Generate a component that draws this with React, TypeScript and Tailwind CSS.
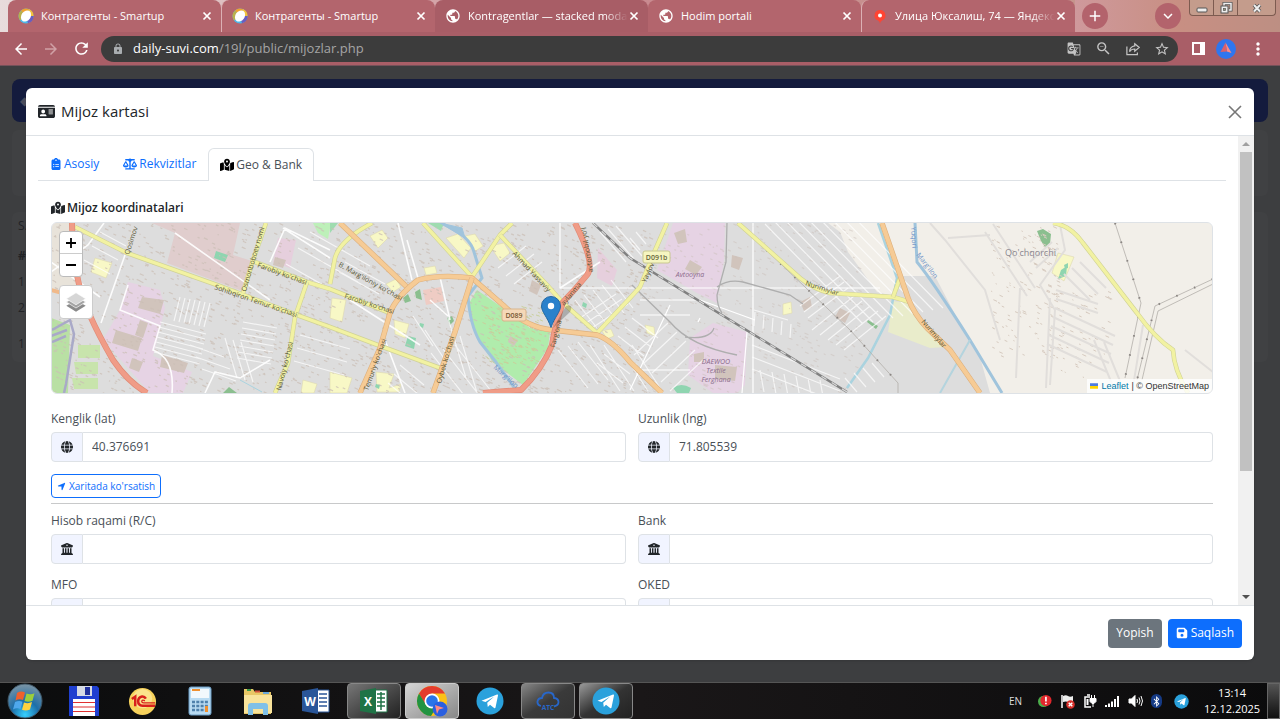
import React from "react";
import {
  FaIdCard,
  FaClipboardList,
  FaScaleBalanced,
  FaMapLocationDot,
  FaGlobe,
  FaBuildingColumns,
  FaLocationArrow,
  FaFloppyDisk,
  FaBluetoothB,
} from "react-icons/fa6";
import {
  MdArrowBack,
  MdArrowForward,
  MdRefresh,
  MdLock,
  MdGTranslate,
  MdZoomOut,
  MdStarBorder,
  MdPublic,
  MdMoreVert,
  MdAdd,
  MdExpandMore,
} from "react-icons/md";

/* ---------- Browser chrome ---------- */

function SmartupIcon() {
  return (
    <svg viewBox="0 0 16 16" className="size-4">
      <circle cx="8" cy="8" r="7.500" fill="#4fb8e8" />
      <path d="M8 8L2 12.500A7.500 7.500 0 0 1 3 2.400z" fill="#b9b04c" />
      <path d="M8 8L3 2.400A7.500 7.500 0 0 1 11 1.100z" fill="#f0a22e" />
      <path d="M8 8L11 1.100A7.500 7.500 0 0 1 15.500 8z" fill="#f3c13a" />
      <path d="M8 8H15.500A7.500 7.500 0 0 1 10 15.200z" fill="#6a5cc0" />
      <ellipse cx="8" cy="8" rx="4.600" ry="6" fill="#fff" transform="rotate(35 8 8)" />
    </svg>
  );
}

function YandexPin() {
  return (
    <svg viewBox="0 0 16 16" className="size-4">
      <path d="M8 2a5.500 5.500 0 0 0-2 10.600q1.500.6 2 3 .5-2.400 2-3A5.500 5.500 0 0 0 8 2z" fill="#f43" />
      <circle cx="8" cy="7.500" r="2" fill="#fff" />
    </svg>
  );
}

const browserTabs = [
  { title: "Контрагенты - Smartup", icon: <SmartupIcon />, active: false },
  { title: "Контрагенты - Smartup", icon: <SmartupIcon />, active: false },
  { title: "Kontragentlar — stacked moda", icon: <MdPublic className="size-4" />, active: true },
  { title: "Hodim portali", icon: <MdPublic className="size-4" />, active: false },
  { title: "Улица Юксалиш, 74 — Яндекс", icon: <YandexPin />, active: false },
];

function TabStrip() {
  return (
    <div className="flex h-8 shrink-0 bg-linear-to-r from-[#e8dcdc] via-[#c98a90] to-[#c39a8b] pl-2 text-white">
      <div className="flex min-w-0 flex-[0_1_1067px]">
        {browserTabs.map((tab, i) => (
          <div
            key={i}
            className={`flex min-w-0 flex-1 items-center rounded-t-lg pr-2 pl-[10px] ${
              tab.active ? "bg-[#a85d66]" : "bg-[#b3656d]"
            } ${i === 1 || i === 4 ? "border-l border-[#dcb0b4]" : ""}`}
          >
            <span className="shrink-0">{tab.icon}</span>
            <span
              className={`ml-[7px] min-w-0 flex-1 overflow-hidden text-[11px] whitespace-nowrap ${
                i === 2 || i === 4 ? "mask-r-from-85%" : ""
              }`}
            >
              {tab.title}
            </span>
            <button aria-label="Yopish" className="shrink-0">
              <svg viewBox="0 0 12 12" className="size-3">
                <path d="M2.500 2.500l7 7M9.500 2.500l-7 7" stroke="#fff" strokeWidth="1.700" />
              </svg>
            </button>
          </div>
        ))}
      </div>
      <div className="flex flex-1 items-center justify-between bg-linear-to-r from-[#cf999c] via-[#c88f83] to-[#bd8f83] pl-[7px]">
        <button aria-label="Yangi varaq" className="flex size-[26px] items-center justify-center rounded-full bg-[#b3636c]">
          <MdAdd className="size-[18px]" />
        </button>
        <div className="flex h-full items-center gap-2 pr-1">
          <button aria-label="Varaqlar" className="flex size-[26px] items-center justify-center rounded-full bg-[#b3636c]">
            <MdExpandMore className="size-[18px]" />
          </button>
          <div className="flex h-4 self-start rounded-b border border-t-0 border-[#7d5b50] bg-[#c49c8c]">
            <button aria-label="Kichraytirish" className="flex w-6 items-center justify-center border-r border-[#7d5b50]">
              <svg viewBox="0 0 14 12" className="h-3 w-[14px]">
                <rect x="2" y="6" width="10" height="4" rx="1" fill="#eee" stroke="#555" />
              </svg>
            </button>
            <button aria-label="Tiklash" className="flex w-6 items-center justify-center border-r border-[#7d5b50]">
              <svg viewBox="0 0 14 12" className="h-3 w-[14px]" fill="none">
                <path d="M5 4V1.500h7V8H9.500" stroke="#555" strokeWidth="3" />
                <path d="M5 4V1.500h7V8H9.500" stroke="#eee" strokeWidth="1.500" />
                <rect x="2" y="4" width="7" height="7" fill="#eee" stroke="#555" />
                <rect x="4.500" y="6.500" width="2" height="2" fill="#997" stroke="#555" strokeWidth=".7" />
              </svg>
            </button>
            <button aria-label="Yopish" className="flex w-[37px] items-center justify-center">
              <svg viewBox="0 0 14 12" className="h-3 w-[14px]">
                <path d="M4 3l6 6.500M10 3L4 9.500" stroke="#555" strokeWidth="3.600" />
                <path d="M4 3l6 6.500M10 3L4 9.500" stroke="#eee" strokeWidth="2" />
              </svg>
            </button>
          </div>
        </div>
      </div>
    </div>
  );
}

function Toolbar() {
  return (
    <div className="flex h-[34px] shrink-0 items-center border-b border-[#75525a] bg-[#a95e67] pr-3 pl-3 text-white">
      <div className="flex w-[89px] items-center gap-3">
        <button aria-label="Orqaga"><MdArrowBack className="size-[18px]" /></button>
        <button aria-label="Oldinga" className="text-[#d0a1a6]"><MdArrowForward className="size-[18px]" /></button>
        <button aria-label="Yangilash"><MdRefresh className="size-[19px]" /></button>
      </div>
      <div className="flex h-[26px] min-w-0 flex-1 items-center rounded-full bg-[#3c3c3c] pr-2 pl-[11px] text-[#c4c4c4]">
        <MdLock className="size-3 shrink-0 text-[#a9adb0]" />
        <div className="ml-[9px] flex-1 text-[13px] text-[#a5a5a5]">
          <span className="text-white">daily-suvi.com</span>/19l/public/mijozlar.php
        </div>
        <div className="flex items-center gap-[14px]">
          <button aria-label="Tarjima"><MdGTranslate className="size-[14px]" /></button>
          <button aria-label="Masshtab"><MdZoomOut className="size-[17px]" /></button>
          <button aria-label="Ulashish">
            <svg viewBox="0 0 16 16" className="size-[14px]" fill="none" stroke="currentColor" strokeWidth="1.400">
              <path d="M1 5v9.500h12V12" />
              <path d="M10 2l5 4.200-5 4.200V8q-4 0-6 3 .6-5.800 6-6.500z" />
            </svg>
          </button>
          <button aria-label="Xatcho'p"><MdStarBorder className="size-4" /></button>
        </div>
      </div>
      <div className="flex items-center gap-[11px] pl-[14px]">
        <button aria-label="Yon panel" className="h-[13px] w-[13px] border-2 border-r-[5px] border-white" />
        <button aria-label="Profil">
          <svg viewBox="0 0 20 20" className="size-5">
            <circle cx="10" cy="10" r="10" fill="#2f76ee" />
            <path d="M9.500 3.500L15.500 14l-4.500-1.500z" fill="#ff8a80" />
            <path d="M9.500 3.500L11 12.500 4.500 13z" fill="#d9606c" />
          </svg>
        </button>
        <button aria-label="Menyu" className="ml-px"><MdMoreVert className="size-5" /></button>
      </div>
    </div>
  );
}

/* ---------- Map ---------- */

// x, y, dx, dy, stepX, stepY, count
const streetGroups: number[][] = [
  [180, 297, -6, 24, 5, 1, 7],
  [160, 322, 46, 12, -1, 5, 7],
  [243, 322, 34, 6, -1, 6, 7],
  [225, 338, 12, 40, 8, 2, 3],
  [310, 232, 60, 34, -12, 16, 3],
  [345, 262, 40, 22, -6, 10, 2],
  [600, 232, 26, 30, 8, -3, 3],
  [498, 268, 28, -22, 8, 8, 3],
  [575, 300, 22, 28, 9, -5, 5],
  [580, 318, 36, -24, 6, 5, 3],
  [632, 318, 26, 20, -7, 9, 6],
  [634, 355, 34, -32, 9, 9, 5],
  [590, 345, 30, 46, 14, 0, 4],
  [558, 350, 30, 38, 10, -4, 3],
  [754, 310, 34, 10, 0, 14, 1],
  [755, 312, -1, 14, 9, 3, 5],
  [752, 345, 88, 34, 0, 12, 3],
  [760, 370, 4, 22, 12, 2, 6],
  [765, 224, 98, 100, 10, -2, 9],
  [812, 330, 42, -34, 8, 5, 5],
  [808, 318, 40, -30, -4, -6, 3],
  [845, 378, 12, 14, 9, -5, 4],
  [400, 365, 24, 20, -6, 9, 3],
  [448, 318, 18, 60, 12, 18, 2],
  [425, 330, 20, 30, -12, -14, 2],
  [455, 345, 36, 46, -12, 4, 3],
  [190, 345, 34, 12, 6, 12, 3],
  [300, 335, 50, 14, -3, 13, 3],
  [100, 232, 26, 14, -8, 14, 3],
  [640, 250, -10, -12, 6, -6, 2],
];

const eastGroups: number[][] = [
  [1055, 308, 60, 28, -2, 9, 5],
  [1056, 290, 42, 14, 0, 9, 2],
  [1030, 262, 22, -20, 6, 6, 2],
  [985, 232, 42, 64, 8, -8, 2],
  [1080, 262, 26, 26, -8, 6, 3],
  [1094, 340, 18, 44, 10, 2, 2],
  [1020, 288, -4, 90, 30, 10, 2],
];

const groupPath = (groups: number[][]) =>
  groups
    .flatMap(([x, y, dx, dy, sx, sy, n]) =>
      Array.from({ length: n }, (_, i) => `M${x + sx * i} ${y + sy * i}l${dx} ${dy}`),
    )
    .join("");

const specks = (seed: number, n: number, x0: number, w: number, y0: number, h: number) => {
  let s = seed * 7919;
  const next = () => (s = (s * 16807) % 2147483647) / 2147483647;
  return Array.from({ length: n }, () => {
    const x = x0 + next() * w;
    const y = y0 + next() * h;
    const len = 1 + next() * 3;
    return `M${x.toFixed(1)} ${y.toFixed(1)}l${len.toFixed(1)} ${(len * 0.45).toFixed(1)}`;
  }).join("");
};

const westSpecks = specks(7, 1700, 51, 600, 223, 170);
const midSpecks = specks(91, 380, 640, 220, 223, 170);
const eastSpecks = specks(33, 150, 990, 70, 226, 130) + specks(51, 70, 1050, 60, 290, 90);
const parkSpecks = specks(17, 160, 482, 60, 306, 58);

const yellowRoads = [
  "M75 227L127 253 217 285 297 315 330 327 383 347 440 368",
  "M266 223L253 260 243 293",
  "M255 262L307 282 330 289 390 313",
  "M307 282L295 317 288 363 275 393",
  "M372 223Q340 240 335 258L330 284",
  "M423 223L472 277 500 235 512 223",
  "M500 235L547 285 563 303 597 333 630 298 640 287 653 255 667 223",
  "M738 223L800 278Q815 290 830 293L893 297 910 302",
  "M900 278L893 297",
  "M1053 223Q1070 225 1083 243L1137 313Q1155 338 1173 350 1174 370 1188 393",
];

const orangeRoads = [
  "M340 223L408 288",
  "M360 393L380 348 390 313Q396 297 418 280 440 274 472 278L503 305Q525 327 552 330L597 335Q612 340 630 362L662 393",
  "M472 278L455 332 433 393",
  "M882 223L908 298Q914 314 927 328L950 350 980 393",
];

const redRoads = [
  "M72 223Q72 250 78 280 84 310 113 360 128 382 147 393",
  "M575 223Q596 265 587 275 575 290 563 302 555 325 552 345 542 370 521 390 505 391 483 393",
];

const roadLabels = [
  { x: 214, y: 289, a: 19, t: "Sohibqiron Temur ko'chasi" },
  { x: 257, y: 267, a: 20, t: "Farobiy ko'chasi" },
  { x: 246, y: 292, a: -74, t: "Osmonboboev nomi" },
  { x: 338, y: 266, a: 29, t: "B. Marg'iloniy ko'chasi" },
  { x: 344, y: 298, a: 18, t: "Farobiy ko'chasi" },
  { x: 512, y: 254, a: 47, t: "Ahmad Yassaviy" },
  { x: 441, y: 384, a: -74, t: "Oybek ko'chasi" },
  { x: 368, y: 391, a: -70, t: "Temuriy ko'chasi" },
  { x: 281, y: 391, a: -76, t: "Navoiy ko'chasi" },
  { x: 555, y: 348, a: -76, t: "Farg'ona" },
  { x: 564, y: 306, a: -50, t: "aylanma" },
  { x: 593, y: 272, a: -99, t: "avtomobil yo'l" },
  { x: 805, y: 285, a: 18, t: "Nurimiylar" },
  { x: 921, y: 322, a: 50, t: "Nurimiylar" },
  { x: 646, y: 283, a: -66, t: "Yaylov" },
  { x: 129, y: 255, a: -72, t: "Qosimov" },
];

function MapCanvas() {
  return (
    <svg viewBox="51 223 1162 170" preserveAspectRatio="xMidYMid slice" className="block size-full font-['Open_Sans',sans-serif]">
      <rect x="51" y="223" width="1162" height="170" fill="#dddddd" />

      {/* open land */}
      <path d="M828 223L840 232 848 252 877 292 893 296 899 276 935 276 958 320 980 357 990 393H1213V223z" fill="#f2efe9" />
      <path d="M893 301L913 304 926 328 946 347 930 348 888 332z" fill="#e9eccb" />
      <path d="M51 223H72L76 262 78 286 51 290z" fill="#e8e3da" />

      {/* industry, schools, parks */}
      <path d="M152 223L175 233 167 263 245 292 255 262 233 255 240 223z" fill="#e0cdcd" />
      <path d="M128 282L160 290 165 308 157 340 153 356 192 372 183 393H150L112 350 104 338 120 310z" fill="#e6d3e4" />
      <path d="M673 223H725L724 260 717 303 697 293 657 270z" fill="#e6d3e4" />
      <path d="M713 323L747 332 745 385 737 393H713L688 375 690 338z" fill="#e6d3e4" />
      <path d="M278 238L296 240 290 268 273 262zM598 248L617 270 612 286 597 278z" fill="#e6cfdd" />
      <path d="M477 290L503 308 530 328 550 332 548 348 523 385 493 362 480 342 473 325 468 305z" fill="#b0ecac" />
      <path d="M51 318L70 325 68 393H51z" fill="#b9e0a4" />
      <path d="M78 345h22v13h-22zM74 362h24v12h-22zM72 378h26v11h-24z" fill="#c8e4ac" />
      <path d="M313 223h18l-3 16-10-6z" fill="#bdf0b9" />
      <path d="M428 223h16l-3 8zM330 223h8l-8 10z" fill="#9fdcb0" />
      <g fill="#f8f8c6" stroke="#ddd8b0" strokeWidth=".6">
        <path d="M95 258L112 263 106 278 91 272zM370 236l12-6 6 8-10 10zM446 238l12-4 13 14-7 10zM465 236l10-2 8 12-9 6zM490 246l14-3 6 10-10 8zM386 284l10-5 5 8-8 5zM424 268l11-2 2 7-11 2z" />
        <path d="M332 298l14 2-4 22-12-4zM394 320l15 4-4 14-10-4zM330 372l22 6-5 15h-17zM303 380l14 4-3 9h-13zM376 372l18 2-5 14 12-4-2 8h-22zM645 325l9 2 1 9-8-3zM783 304l8-2 1 11-9 2zM602 331l9-2 3 7-7 3z" />
        <path d="M1058 253l16 4-10 24-12-8z" />
      </g>
      <g fill="#d1c4bc">
        <path d="M142 297l22 3-4 14-22-6zM116 330l26 8-4 13-26-8zM162 355l26 8-4 10-24-6zM132 358l11 4-4 10-10-4zM140 320l8 3-5 15-8-3zM690 260l12 7-6 8-11-6zM674 233l11-4 2 13-9 2zM732 255l11 3-4 12-8-3zM715 365l22 2-2 14-20-2zM694 354l10-2v10h-10zM840 308l10 5-5 10-10-6zM800 302l10-5 2 10-8 4zM532 280l9 5-4 10-8-4zM275 257l11 3-3 8-10-3zM510 336l8 4-4 6-6-4z" />
      </g>
      <path d="M423 290l18-3 3 14-18 4z" fill="#efccc4" />
      <g fill="#8fd5b0">
        <path d="M216 251l12 4-3 7-11-4zM408 336l8 2-2 11-9-3zM583 302l4 2-1 4-4-2zM420 323l4 1-1 4-4-2zM376 384l4 1-1 4-4-2zM1061 270l6-4-1 10-8 3zM1064 265l4-2v5l-3 1z" />
        <path d="M673 388q8-6 18 0l-2 5h-12z" />
      </g>
      <path d="M1037 231l6-2 8 5-1 10-5 3-4-6zM223 393l6-6 8 6zM403 298l5-4 3 7-6 2zM415 292l5-3 2 11-6-2zM447 318l5-2 2 5-4 4zM868 320l10 6-2 3-9-7z" fill="#8bbf8f" />

      {/* buildings */}
      <path d={westSpecks} stroke="#cbbfb6" strokeWidth="1.200" opacity=".75" />
      <path d={midSpecks} stroke="#cbc0ba" strokeWidth="1.200" opacity=".5" />
      <path d={eastSpecks} stroke="#d6cabf" strokeWidth="1" />
      <path d={parkSpecks} stroke="#c9cf9c" strokeWidth="1" />

      {/* water */}
      <g fill="none" stroke="#a0c4dc">
        <path d="M443 224Q470 236 474 252L482 278 468 296Q470 325 480 342 500 366 517 392" strokeWidth="3" />
        <path d="M440 223L462 228 465 238z" fill="#a0c4dc" />
        <path d="M878 223L897 278 890 315 868 358 847 388" strokeWidth="2.500" stroke="#aad3df" />
        <path d="M915 223L917 262Q932 280 970 340L1002 393" strokeWidth="3" />
        <path d="M970 340L940 393" strokeWidth="2" stroke="#b4d4de" />
        <path d="M240 380L262 392" strokeWidth="1" stroke="#aad3df" />
        <path d="M52 330l18-10 4 14-8 50-2 9M51 336l16-6M52 342l14-6" stroke="#a9a9c8" strokeWidth="2.500" />
      </g>

      {/* minor streets */}
      <g fill="none" stroke="#ffffff" strokeWidth="1.200">
        <path d={groupPath(streetGroups)} opacity=".7" />
        <path d="M125 255L101 323M104 223L88 245 51 272M51 262L100 297M128 285L120 310 160 326 153 350Q175 358 172 393M175 233L270 300M283 228L330 258M270 262L285 228 330 250M398 223L412 280M350 300L420 345M407 240L418 278M385 340L405 393M440 277L450 320M560 288L600 262M430 300L448 316M205 393L215 372 240 378 270 360" strokeWidth="1.600" opacity=".9" />
        <path d="M560 223V288H880M753 223V393M640 300H700L755 320M640 315H690M670 305L630 390M635 370H690M700 318L698 322M747 332L742 393" />
        <path d={groupPath(eastGroups)} stroke="#e1dedb" strokeWidth="2" />
        <path d="M930 223L945 240 985 290 1000 340M948 238L990 235M1060 225L1065 250 1040 285 1055 310 1050 385M1185 350L1213 372M1132 393L1143 325" stroke="#e1dedb" strokeWidth="2" />
      </g>

      {/* railways */}
      <g fill="none">
        <path d="M727 223L726 262 717 295Q717 306 722 313M717 287Q728 279 743 282L790 295 803 304M632 285L670 322Q690 346 737 355M685 337Q710 340 714 328" stroke="#aeaeae" strokeWidth="1.300" />
        <path d="M593 223L630 258 717 312 847 392" stroke="#808080" strokeWidth="2.400" />
        <path d="M593 223L630 258 717 312 847 392" stroke="#d8d8d8" strokeWidth="1.200" strokeDasharray="6 6" />
        <path d="M738 223L850 330 898 383V393M1115 223L1141 303 1125 378M1213 279L1155 306 1137 380M1213 284L1158 311 1142 380" stroke="#b3aeaa" strokeWidth=".8" />
        <path d="M738 223L850 330 898 383M1115 223L1141 303 1125 378M1213 279L1155 306 1137 380" stroke="#8a8582" strokeWidth="2" strokeDasharray="1.500 18" />
      </g>

      {/* main roads */}
      <g fill="none" strokeLinejoin="round">
        {yellowRoads.map((d) => (
          <React.Fragment key={d}>
            <path d={d} stroke="#d0d296" strokeWidth="4.600" />
            <path d={d} stroke="#f2f2a2" strokeWidth="3.400" />
          </React.Fragment>
        ))}
        {orangeRoads.map((d) => (
          <React.Fragment key={d}>
            <path d={d} stroke="#deb07c" strokeWidth="5.400" />
            <path d={d} stroke="#f6cb95" strokeWidth="4.200" />
          </React.Fragment>
        ))}
        {redRoads.map((d) => (
          <React.Fragment key={d}>
            <path d={d} stroke="#e08a76" strokeWidth="6" />
            <path d={d} stroke="#f09c87" strokeWidth="4.600" />
          </React.Fragment>
        ))}
        <path d="M51 290L66 294 80 302" stroke="#f0b98a" strokeWidth="4" />
      </g>

      {/* labels */}
      <g fontSize="7" fontWeight="500" fill="#5a5838">
        {roadLabels.map((l) => (
          <text key={`${l.x}-${l.y}`} transform={`translate(${l.x} ${l.y}) rotate(${l.a})`}>
            {l.t}
          </text>
        ))}
      </g>
      <g fontSize="7" fill="#6f93c8">
        <text transform="translate(493 368) rotate(42)">Marg'ilon</text>
        <text transform="translate(911 227) rotate(86)">Yuqori</text>
        <text transform="translate(916 255) rotate(52)">Marg'ilon</text>
      </g>
      <g fontSize="7" fill="#8a6b8b" fontStyle="italic" textAnchor="middle">
        <text x="690" y="277">Avtooyna</text>
        <text x="716" y="364">DAEWOO</text>
        <text x="716" y="373">Textile</text>
        <text x="716" y="382">Ferghana</text>
      </g>
      <text x="1005" y="256" fontSize="9" fill="#8b8790">Qo'chqorchi</text>
      <g fontSize="7" fontWeight="600" textAnchor="middle">
        <rect x="502" y="309" width="24" height="12" rx="2" fill="#f5d8b8" stroke="#d8b58c" />
        <text x="514" y="317.500" fill="#7a5a35">D089</text>
        <rect x="643" y="251" width="27" height="12" rx="2" fill="#f5f5c0" stroke="#c8c890" />
        <text x="656.500" y="259.500" fill="#66663c">D091b</text>
      </g>

      {/* marker */}
      <path d="M553 328L570 312Q574 304 566 306z" fill="#000" opacity=".22" />
      <path d="M551 296.500a9.500 9.500 0 0 0-9.500 9.500c0 6 6 11 9.500 21.500 3.500-10.500 9.500-15.500 9.500-21.500a9.500 9.500 0 0 0-9.500-9.500z" fill="#2a81cb" stroke="#2468a3" />
      <circle cx="551" cy="306" r="3.200" fill="#fff" />
    </svg>
  );
}

function LeafletMap() {
  return (
    <div className="relative h-[172px] overflow-hidden rounded-md border border-[#dee2e6]">
      <MapCanvas />
      <div className="absolute top-2 left-[7px] flex flex-col gap-2">
        <div className="flex w-6 flex-col rounded-sm border border-[#bbb] bg-white text-black">
          <button aria-label="Zoom in" className="flex h-[22px] items-center justify-center border-b border-[#ccc]">
            <svg viewBox="0 0 10 10" className="size-[10px]"><path d="M5 0v10M0 5h10" stroke="#000" strokeWidth="1.800" /></svg>
          </button>
          <button aria-label="Zoom out" className="flex h-[22px] items-center justify-center">
            <svg viewBox="0 0 10 10" className="size-[10px]"><path d="M0 5h10" stroke="#000" strokeWidth="1.800" /></svg>
          </button>
        </div>
        <button aria-label="Layers" className="flex size-[34px] items-center justify-center rounded border border-[#ccc] bg-white">
          <svg viewBox="0 0 26 26" className="size-6">
            <path d="M2.500 17L13 23.500 23.500 17 13 11z" fill="#8a8a8a" />
            <path d="M2.500 13L13 19.500 23.500 13 13 7z" fill="#a3a3a3" stroke="#fff" strokeWidth=".7" />
            <path d="M2.500 9.500L13 16l10.500-6.500L13 3z" fill="#d6d6d6" stroke="#fff" strokeWidth=".7" />
          </svg>
        </button>
      </div>
      <div className="absolute right-0 bottom-0 flex items-center gap-[3px] bg-white/80 px-[3px] font-['Liberation_Sans',sans-serif] text-[9px] leading-[14px] text-[#333]">
        <svg viewBox="0 0 12 8" className="h-[6px] w-2"><path fill="#4c7be1" d="M0 0h12v4H0z" /><path fill="#ffd500" d="M0 4h12v4H0z" /></svg>
        <a href="#leaflet" className="text-[#0078a8]">Leaflet</a>
        <span>| © OpenStreetMap</span>
      </div>
    </div>
  );
}

/* ---------- Modal ---------- */

function Field({ id, label, value = "", icon }: { id: string; label: string; value?: string; icon: React.ReactNode }) {
  return (
    <div className="min-w-0 flex-1">
      <label htmlFor={id} className="mb-1 block text-[12px] leading-[18px] text-[#495057]">{label}</label>
      <div className="flex h-[30px]">
        <span className="flex w-8 shrink-0 items-center justify-center rounded-l border border-[#dee2e6] bg-[#f1f4ff] text-[12px] text-[#212529]">
          {icon}
        </span>
        <input
          id={id}
          defaultValue={value}
          className="min-w-0 flex-1 rounded-r border border-l-0 border-[#dee2e6] bg-white px-[9px] text-[12px] text-[#495057] outline-none"
        />
      </div>
    </div>
  );
}

function ModalTabs() {
  return (
    <div role="tablist" className="flex h-[33px] border-b border-[#dee2e6] text-[12px]">
      <button role="tab" className="flex items-center gap-[2px] px-3 text-[#0d6efd]">
        <FaClipboardList /> Asosiy
      </button>
      <button role="tab" className="flex items-center gap-[2px] px-3 text-[#0d6efd]">
        <FaScaleBalanced className="size-[14px]" /> Rekvizitlar
      </button>
      <button
        role="tab"
        aria-selected="true"
        className="-mb-px flex items-center gap-[2px] rounded-t-md border border-b-0 border-[#dee2e6] bg-white px-[11px] text-[#495057]"
      >
        <FaMapLocationDot className="size-[14px] text-black" /> Geo &amp; Bank
      </button>
    </div>
  );
}

function ClientModal() {
  return (
    <div role="dialog" aria-label="Mijoz kartasi" className="flex min-h-0 flex-1 flex-col overflow-hidden rounded-md bg-white shadow">
      <header className="flex h-12 shrink-0 items-center justify-between border-b border-[#dee2e6] px-3 text-[#212529]">
        <h1 className="flex items-center gap-[6px] text-[15px]">
          <FaIdCard className="size-[17px]" /> Mijoz kartasi
        </h1>
        <button aria-label="Yopish">
          <svg viewBox="0 0 14 14" className="size-[14px]"><path d="M1 1l12 12M13 1L1 13" stroke="#777" strokeWidth="1.600" /></svg>
        </button>
      </header>

      <div className="flex min-h-0 flex-1">
        <div className="min-w-0 flex-1 overflow-hidden p-3">
          <ModalTabs />
          <div className="px-[13px] pt-[17px]">
            <h2 className="mb-1 flex items-center gap-[2px] text-[12px] leading-5 font-semibold text-[#212529]">
              <FaMapLocationDot className="size-[14px]" /> Mijoz koordinatalari
            </h2>
            <LeafletMap />
            <div className="mt-4 flex gap-3">
              <Field id="lat" label="Kenglik (lat)" value="40.376691" icon={<FaGlobe />} />
              <Field id="lng" label="Uzunlik (lng)" value="71.805539" icon={<FaGlobe />} />
            </div>
            <button className="mt-3 flex h-6 items-center gap-[3px] rounded-sm border border-[#0d6efd] px-[5px] text-[10px] text-[#0d6efd]">
              <FaLocationArrow className="size-[9px]" /> Xaritada ko'rsatish
            </button>
            <hr className="mt-[5px] mb-2 border-[#c8c9ca]" />
            <div className="flex gap-3">
              <Field id="account" label="Hisob raqami (R/C)" icon={<FaBuildingColumns />} />
              <Field id="bank" label="Bank" icon={<FaBuildingColumns />} />
            </div>
            <div className="mt-3 flex gap-3">
              <Field id="mfo" label="MFO" icon={null} />
              <Field id="oked" label="OKED" icon={null} />
            </div>
          </div>
        </div>
        <div className="flex w-4 shrink-0 flex-col items-center bg-[#f1f1f1]">
          <svg viewBox="0 0 16 16" className="size-4"><path d="M4 10l4-4 4 4z" fill="#a0a0a0" /></svg>
          <div className="w-3 flex-[320] bg-[#c1c1c1]" />
          <div className="flex-[118]" />
          <svg viewBox="0 0 16 16" className="size-4"><path d="M4 6l4 4 4-4z" fill="#505050" /></svg>
        </div>
      </div>

      <footer className="flex h-[55px] shrink-0 items-center justify-end gap-[6px] border-t border-[#dee2e6] pr-3 text-[12px] text-white">
        <button className="h-[29px] rounded bg-[#6c757d] px-2">Yopish</button>
        <button className="flex h-[29px] items-center gap-[3px] rounded bg-[#0d6efd] px-2">
          <FaFloppyDisk /> Saqlash
        </button>
      </footer>
    </div>
  );
}

/* ---------- Page behind the dialog ---------- */

function Backdrop() {
  return (
    <div className="absolute inset-0 bg-[#3d3e40] px-3 pt-[13px] text-[12px] text-[#222326]">
      <div className="flex h-[43px] items-center justify-between rounded-lg bg-[#141b3d] px-2 text-[#4a4c5c]">
        <span>◆</span>
      </div>
      <div className="mt-2 h-[66px] rounded-md bg-[#404143]" />
      <div className="mt-4 h-[150px] rounded-md bg-[#404143] px-[6px] pt-[5px] leading-[18px]">
        <p>S.</p>
        <p className="mt-3 font-bold">#</p>
        <p className="mt-2">1</p>
        <p className="mt-2">2</p>
        <p className="mt-[18px]">1</p>
      </div>
    </div>
  );
}

/* ---------- Taskbar ---------- */

function StartOrb() {
  return (
    <svg viewBox="0 0 36 36" className="size-9">
      <defs>
        <radialGradient id="orb" cx=".5" cy=".9" r=".9">
          <stop offset="0" stopColor="#35d0ff" />
          <stop offset=".45" stopColor="#1d6ea8" />
          <stop offset="1" stopColor="#7d95a5" />
        </radialGradient>
      </defs>
      <circle cx="18" cy="18" r="17" fill="url(#orb)" stroke="#3e5666" />
      <path d="M10 10q4-2.500 8-.5l-2 7.500q-4-1.800-7.500.5z" fill="#f0602c" />
      <path d="M19.500 10.500q4 1.800 8-.3l-2 7.500q-4 2-8 .3z" fill="#9ccf3c" />
      <path d="M8 19q4-2 7.500-.3l-2 7.300q-4-1.600-7.500.5z" fill="#4fa8ec" />
      <path d="M17 19.500q4 1.600 8-.4l-2 7.400q-4 2-8 .3z" fill="#ffd23e" />
    </svg>
  );
}

const TelegramIcon = ({ className = "size-7" }: { className?: string }) => (
  <svg viewBox="0 0 28 28" className={className}>
    <circle cx="14" cy="14" r="13.500" fill="#2aa1dc" />
    <path d="M5.500 13.800L21 7.500q1.200-.3 1 1L19.500 20.500q-.4 1-1.400.4L14 17.800l-2.200 2.200-.6-4.200 7-6.300-8.700 5.500z" fill="#fff" />
  </svg>
);

const TotalCommander = () => (
  <svg viewBox="0 0 32 32" className="size-8">
    <path d="M1 1h28l2 2v28H1z" fill="#1f3fd0" />
    <path d="M9 1h15v10H9z" fill="#d5dae4" />
    <path d="M17 2h5v8h-5z" fill="#20309c" />
    <path d="M5 14h22v17H5z" fill="#fff" />
    <path d="M5 17.500h22M5 22h22M5 26.500h22" stroke="#e03030" strokeWidth="1.200" />
  </svg>
);

const OneC = () => (
  <svg viewBox="0 0 30 30" className="size-[29px]">
    <circle cx="15" cy="15" r="14" fill="#f7d25c" />
    <circle cx="15" cy="12" r="10" fill="#fbe38c" />
    <path d="M4 12.500L7.500 10V20M18.500 12q-1.500-2.500-4-2.200-4 .7-4 5t4.500 4.700H28" fill="none" stroke="#d8201c" strokeWidth="2.600" />
    <path d="M17.500 14.300q-2.800-1.500-3.300.5 0 1.700 2 1.700H28" fill="none" stroke="#d8201c" strokeWidth="1.300" />
  </svg>
);

const Calculator = () => (
  <svg viewBox="0 0 24 30" className="h-[30px] w-6">
    <rect x="1" y="1" width="22" height="28" rx="2" fill="#b9dbf2" stroke="#6a9cc4" />
    <rect x="3" y="3" width="18" height="9" fill="#f2f8fc" />
    <path d="M4 4h8" stroke="#f09030" strokeWidth="2" />
    <path d="M4 16h16M4 20h16M4 24h16" stroke="#4f81ac" strokeWidth="2.500" strokeDasharray="3 1.300" />
    <path d="M18.500 20v6" stroke="#f09030" strokeWidth="3" />
  </svg>
);

const Explorer = () => (
  <svg viewBox="0 0 32 30" className="h-[30px] w-8">
    <path d="M2 3h9l2 3h16v22H2z" fill="#e8c765" />
    <path d="M5 4h4" stroke="#3a9a4a" strokeWidth="2" />
    <path d="M13 5.500h5" stroke="#d0503a" strokeWidth="2" />
    <path d="M21 7h6" stroke="#6aa8d8" strokeWidth="2" />
    <path d="M2 9h28v18H2z" fill="#f8e39b" />
    <path d="M6 29v-9q0-3 3-3h14q3 0 3 3v9h-5v-6H11v6z" fill="#7fc0e8" />
  </svg>
);

function OfficeIcon({ letter, color }: { letter: string; color: string }) {
  return (
    <svg viewBox="0 0 30 28" className="h-7 w-[30px]">
      <path d="M15 3h13v22H15z" fill="#fff" stroke={color} />
      <path d="M18 7h8M18 11h8M18 15h8M18 19h8" stroke={color} strokeWidth="1.500" />
      {letter === "X" && <path d="M22 5v18" stroke={color} strokeWidth="1.500" />}
      <path d="M1 4L17 1v26L1 24z" fill={color} />
      <text x="9" y="18.500" textAnchor="middle" fontSize="12" fontWeight="700" fill="#fff">{letter}</text>
    </svg>
  );
}

const Chrome = () => (
  <svg viewBox="0 0 32 32" className="size-8">
    <circle cx="16" cy="16" r="15" fill="#fbc116" />
    <path d="M3 8.500A15 15 0 0 1 29 8.500H16L9.500 20z" fill="#e33b2e" />
    <path d="M3 8.500A15 15 0 0 0 15 31l7.500-12H9.500z" fill="#229342" />
    <circle cx="16" cy="16" r="7.500" fill="#fff" />
    <circle cx="16" cy="16" r="5.800" fill="#2a74e8" />
    <circle cx="24" cy="24" r="7.500" fill="#2a5fe0" />
    <path d="M19 20l9 3-5 1.500-2 4.500z" fill="#ff8a80" />
  </svg>
);

const CloudApp = () => (
  <svg viewBox="0 0 24 20" className="h-5 w-6" fill="none" stroke="#2867c9" strokeWidth="1.800">
    <path d="M5 15q-4-1-3.500-4.500Q2 7 6 7q1-5.500 6.500-5.500T18 7q4.500.5 4.500 4T18 15.500" />
    <text x="12" y="19" textAnchor="middle" fontSize="6.500" fontWeight="700" fill="#2867c9" stroke="none">ATC</text>
  </svg>
);

const apps = [
  { name: "Total Commander", icon: <TotalCommander />, style: "border-transparent" },
  { name: "1C", icon: <OneC />, style: "border-transparent" },
  { name: "Kalkulyator", icon: <Calculator />, style: "border-transparent" },
  { name: "Explorer", icon: <Explorer />, style: "border-transparent" },
  { name: "Word", icon: <OfficeIcon letter="W" color="#2a5699" />, style: "border-transparent" },
  { name: "Excel", icon: <OfficeIcon letter="X" color="#1f7346" />, style: "border-[#888] bg-linear-to-br from-[#777] to-[#222]" },
  { name: "Chrome", icon: <Chrome />, style: "border-[#ccc] bg-linear-to-br from-[#d5d5d5] to-[#888]" },
  { name: "Telegram", icon: <TelegramIcon />, style: "border-transparent" },
  { name: "ATC", icon: <CloudApp />, style: "border-[#888] bg-linear-to-br from-[#888] via-[#3a3a3a] to-[#333]" },
  { name: "Telegram 2", icon: <TelegramIcon />, style: "border-[#888] bg-linear-to-br from-[#999] via-[#333] to-[#222]" },
];

function Tray() {
  return (
    <div className="flex items-center gap-2 text-white">
      <svg viewBox="0 0 15 15" className="size-[14px]">
        <circle cx="6" cy="8" r="6" fill="#4cae4c" /><circle cx="8.500" cy="7" r="6" fill="#e0262c" />
        <path d="M8.500 3v5M8.500 9.500v1.500" stroke="#fff" strokeWidth="1.800" />
      </svg>
      <svg viewBox="0 0 15 15" className="size-[15px]">
        <path d="M2 1v13" stroke="#fff" strokeWidth="1.500" /><path d="M3 2q3-1.500 5 0t5 0v6q-3 1-5 0t-5 0z" fill="#eee" />
        <circle cx="10.500" cy="10.500" r="4.300" fill="#d8302a" /><path d="M8.700 8.700l3.600 3.600M12.300 8.700l-3.600 3.600" stroke="#fff" strokeWidth="1.400" />
      </svg>
      <svg viewBox="0 0 14 14" className="size-[14px]" fill="none" stroke="#fff" strokeWidth="1.500">
        <path d="M7 3H2v10h6M4 1h3" /><path d="M4.500 5v6" strokeWidth="2" /><path d="M8.500 1v3M11.500 1v3M7 4.500h6v3l-2 2H9l-2-2zM10 9v4" fill="#fff" strokeWidth="1" />
      </svg>
      <svg viewBox="0 0 15 14" className="h-[14px] w-[15px]" fill="#fff">
        <path d="M0 11h2v2H0zM3 9.500h2V13H3zM6 7.500h2V13H6zM9 5h2v8H9zM12 2h2v11h-2z" />
      </svg>
      <svg viewBox="0 0 15 14" className="h-[14px] w-[15px]" fill="none" stroke="#fff">
        <path d="M1 5h2.500L7 1.500v11L3.500 9H1z" fill="#fff" /><path d="M9 5q1 2 0 4M11 3.500q2 3.500 0 7M13 2q3 5 0 10" />
      </svg>
      <span className="flex h-[14px] w-[11px] items-center justify-center rounded-full bg-[#153a85]"><FaBluetoothB className="size-[11px]" /></span>
      <TelegramIcon className="ml-1 size-[15px]" />
    </div>
  );
}

function Taskbar() {
  return (
    <div className="flex h-[37px] shrink-0 items-center border-t border-[#555] bg-linear-to-r from-[#0b0c0d] via-[#1a1718] to-[#0b0b0c] font-['Open_Sans',sans-serif]">
      <button aria-label="Start" className="mr-[14px] ml-[7px]"><StartOrb /></button>
      <div className="flex gap-1">
        {apps.map((app) => (
          <button key={app.name} aria-label={app.name} className={`flex h-9 w-[54px] items-center justify-center rounded-sm border ${app.style}`}>
            {app.icon}
          </button>
        ))}
      </div>
      <div className="flex-1" />
      <span className="mr-4 text-[10px] text-[#ddd]">EN</span>
      <Tray />
      <div className="ml-3 w-[62px] text-center text-[11px] leading-4 text-white">
        <div>13:14</div>
        <div>12.12.2025</div>
      </div>
      <button aria-label="Ish stoli" className="ml-1 h-9 w-[13px] border border-[#666] bg-linear-to-b from-[#555] to-[#111]" />
    </div>
  );
}

export default function App() {
  return (
    <div className="flex h-screen flex-col overflow-hidden font-['Open_Sans','Noto_Sans',sans-serif]">
      <TabStrip />
      <Toolbar />
      <main className="relative flex min-h-0 flex-1 flex-col">
        <Backdrop />
        <div className="relative flex min-h-0 flex-1 flex-col px-[26px] py-[22px]">
          <ClientModal />
        </div>
      </main>
      <Taskbar />
    </div>
  );
}
